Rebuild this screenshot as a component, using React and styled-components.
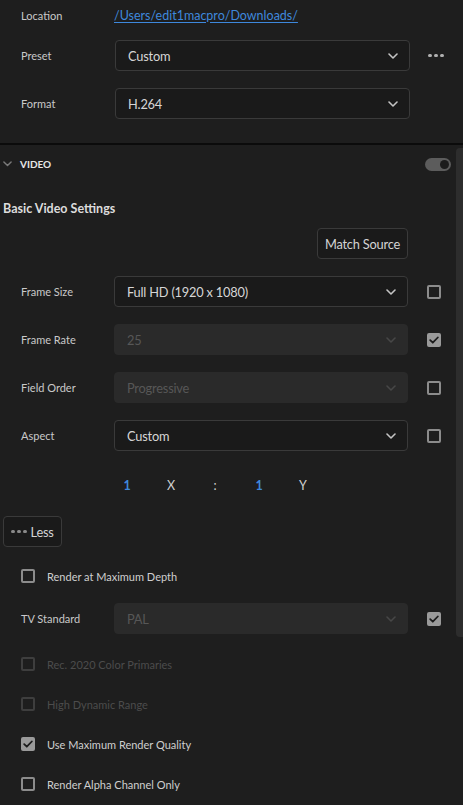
import React from "react";
import styled, { createGlobalStyle } from "styled-components";

const Global = createGlobalStyle`
  html, body { margin: 0; padding: 0; background: #1e1e1e; }
  body { font-family: Lato, "Open Sans", sans-serif; color: #c8c8c8; }
  * { box-sizing: border-box; }
`;

const Page = styled.div`
  width: 463px;
  height: 805px;
  background: #1e1e1e;
  overflow: hidden;
  display: flex;
  flex-direction: column;
`;

const TopSection = styled.section`
  display: flex;
  flex-direction: column;
  padding-top: 5px;
  height: 143px;
  flex: none;
`;

const Separator = styled.div`
  height: 2px;
  background: #0b0b0b;
  flex: none;
`;

const VideoSection = styled.section`
  position: relative;
  display: flex;
  flex-direction: column;
  flex: 1;
`;

const Row = styled.div`
  display: flex;
  align-items: center;
  height: ${(p) => p.$h || 31}px;
  margin-top: ${(p) => p.$mt || 0}px;
  padding-left: 21px;
  flex: none;
`;

const Label = styled.div`
  width: ${(p) => p.$w || 93}px;
  flex: none;
  font-size: 11px;
  color: #c9c9c9;
`;

const Link = styled.a`
  font-size: 12.5px;
  color: #3e88dc;
  text-decoration: underline;
  text-underline-offset: 2px;
`;

const Select = styled.div`
  width: ${(p) => p.$w || 294}px;
  height: 31px;
  flex: none;
  display: flex;
  align-items: center;
  justify-content: space-between;
  padding: 0 11px 0 12px;
  border-radius: 4px;
  background: ${(p) => (p.$disabled ? "#2a2a2a" : "#1a1a1a")};
  border: 1px solid ${(p) => (p.$disabled ? "#2a2a2a" : "#3a3a3a")};
  color: ${(p) => (p.$disabled ? "#575757" : "#d6d6d6")};
  font-size: 12.8px;
  letter-spacing: -0.2px;
`;

const Trailing = styled.div`
  flex: none;
  display: flex;
  align-items: center;
  padding-left: ${(p) => p.$pl || 19}px;
`;

const Dots = styled.span`
  display: flex;
  gap: 2.5px;
  & > i {
    display: block;
    width: 3.5px;
    height: 3.5px;
    border-radius: 50%;
    background: ${(p) => p.$color || "#b0b0b0"};
  }
`;

const Box = styled.span`
  width: 14px;
  height: 14px;
  flex: none;
  border-radius: 2px;
  border: 2px solid ${(p) => (p.$dim ? "#3e3e3e" : "#8c8c8c")};
  background: ${(p) => (p.$checked ? "#9a9a9a" : "transparent")};
  display: flex;
  align-items: center;
  justify-content: center;
  ${(p) => p.$checked && "border-color: #9a9a9a;"}
`;

const HeaderRow = styled.div`
  display: flex;
  align-items: center;
  height: 24px;
  margin-top: 7px;
  padding: 0 12px 0 3px;
`;

const HeaderTitle = styled.div`
  font-size: 10px;
  font-weight: 700;
  color: #e6e6e6;
  margin-left: 8px;
  flex: 1;
`;

const Toggle = styled.span`
  width: 26px;
  height: 13px;
  border-radius: 7px;
  background: #5c5c5c;
  display: flex;
  align-items: center;
  justify-content: flex-end;
  padding-right: 2px;
  & > i {
    display: block;
    width: 9px;
    height: 9px;
    border-radius: 50%;
    background: #1c1c1c;
  }
`;

const SubTitle = styled.div`
  font-size: 12.5px;
  font-weight: 700;
  color: #dcdcdc;
  padding-left: 3px;
  height: 20px;
  display: flex;
  align-items: center;
  margin-top: 22px;
`;

const ButtonRow = styled.div`
  display: flex;
  justify-content: ${(p) => (p.$end ? "flex-end" : "flex-start")};
  padding: ${(p) => (p.$end ? "0 55px 0 0" : "0 0 0 3px")};
  margin-top: ${(p) => p.$mt || 0}px;
`;

const Button = styled.button`
  height: 31px;
  padding: 0 ${(p) => p.$px || 7}px;
  background: #1a1a1a;
  border: 1px solid #3a3a3a;
  border-radius: 4px;
  color: #d4d4d4;
  font-family: Lato, "Open Sans", sans-serif;
  font-size: 12.8px;
  letter-spacing: -0.2px;
  display: flex;
  align-items: center;
  gap: 4px;
`;

const RatioRow = styled.div`
  display: flex;
  align-items: center;
  height: 20px;
  margin-top: 24px;
  padding-left: 114px;
  gap: 18px;
`;

const RatioCell = styled.span`
  width: 26px;
  text-align: center;
  font-size: 12.5px;
  color: ${(p) => (p.$blue ? "#3e88dc" : "#d0d0d0")};
  font-weight: ${(p) => (p.$blue ? 700 : 400)};
`;

const CheckRow = styled.div`
  display: flex;
  align-items: center;
  height: 20px;
  margin-top: ${(p) => p.$mt || 20}px;
  padding-left: 21px;
  gap: 12px;
`;

const CheckText = styled.span`
  font-size: 11px;
  color: ${(p) => (p.$dim ? "#4c4c4c" : "#cfcfcf")};
`;

const Scrollbar = styled.div`
  position: absolute;
  right: 0;
  top: 3px;
  width: 7px;
  height: 489px;
  background: #2d2d2d;
  border-radius: 4px 0 0 4px;
`;

const Chevron = ({ color = "#c4c4c4", size = 10 }) => (
  <svg width={size} height={size * 0.6} viewBox="0 0 10 6" fill="none">
    <path d="M1 1l4 4 4-4" stroke={color} strokeWidth="1.6" strokeLinecap="round" strokeLinejoin="round" />
  </svg>
);

const Check = () => (
  <svg width="10" height="8" viewBox="0 0 10 8" fill="none">
    <path d="M1.2 4.2l2.6 2.5 5-5.2" stroke="#1c1c1c" strokeWidth="1.8" strokeLinecap="round" strokeLinejoin="round" />
  </svg>
);

const Checkbox = ({ checked, dim }) => (
  <Box $checked={checked} $dim={dim}>{checked && <Check />}</Box>
);

const Dropdown = ({ value, disabled, w }) => (
  <Select $disabled={disabled} $w={w}>
    <span>{value}</span>
    <Chevron color={disabled ? "#474747" : "#c4c4c4"} />
  </Select>
);

export default function App() {
  return (
    <Page>
      <Global />
      <TopSection>
        <Row $h={20}>
          <Label>Location</Label>
          <Link>/Users/edit1macpro/Downloads/</Link>
        </Row>
        <Row $mt={15}>
          <Label $w={94}>Preset</Label>
          <Dropdown value="Custom" w={295} />
          <Trailing $pl={18}>
            <Dots><i /><i /><i /></Dots>
          </Trailing>
        </Row>
        <Row $mt={17}>
          <Label $w={94}>Format</Label>
          <Dropdown value="H.264" w={295} />
        </Row>
      </TopSection>
      <Separator />
      <VideoSection>
        <Scrollbar />
        <HeaderRow>
          <Chevron color="#7a7a7a" size={9} />
          <HeaderTitle>VIDEO</HeaderTitle>
          <Toggle><i /></Toggle>
        </HeaderRow>
        <SubTitle>Basic Video Settings</SubTitle>
        <ButtonRow $end $mt={10}>
          <Button $px={7}>Match Source</Button>
        </ButtonRow>
        <Row $mt={17}>
          <Label>Frame Size</Label>
          <Dropdown value="Full HD (1920 x 1080)" />
          <Trailing><Checkbox /></Trailing>
        </Row>
        <Row $mt={17}>
          <Label>Frame Rate</Label>
          <Dropdown value="25" disabled />
          <Trailing><Checkbox checked /></Trailing>
        </Row>
        <Row $mt={17}>
          <Label>Field Order</Label>
          <Dropdown value="Progressive" disabled />
          <Trailing><Checkbox /></Trailing>
        </Row>
        <Row $mt={17}>
          <Label>Aspect</Label>
          <Dropdown value="Custom" />
          <Trailing><Checkbox /></Trailing>
        </Row>
        <RatioRow>
          <RatioCell $blue>1</RatioCell>
          <RatioCell>X</RatioCell>
          <RatioCell>:</RatioCell>
          <RatioCell $blue>1</RatioCell>
          <RatioCell>Y</RatioCell>
        </RatioRow>
        <ButtonRow $mt={21}>
          <Button $px={7}>
            <Dots $color="#8a8a8a"><i /><i /><i /></Dots>
            Less
          </Button>
        </ButtonRow>
        <CheckRow $mt={19}>
          <Checkbox />
          <CheckText>Render at Maximum Depth</CheckText>
        </CheckRow>
        <Row $mt={17}>
          <Label>TV Standard</Label>
          <Dropdown value="PAL" disabled />
          <Trailing><Checkbox checked /></Trailing>
        </Row>
        <CheckRow $mt={20}>
          <Checkbox dim />
          <CheckText $dim>Rec. 2020 Color Primaries</CheckText>
        </CheckRow>
        <CheckRow>
          <Checkbox dim />
          <CheckText $dim>High Dynamic Range</CheckText>
        </CheckRow>
        <CheckRow>
          <Checkbox checked />
          <CheckText>Use Maximum Render Quality</CheckText>
        </CheckRow>
        <CheckRow>
          <Checkbox />
          <CheckText>Render Alpha Channel Only</CheckText>
        </CheckRow>
      </VideoSection>
    </Page>
  );
}
